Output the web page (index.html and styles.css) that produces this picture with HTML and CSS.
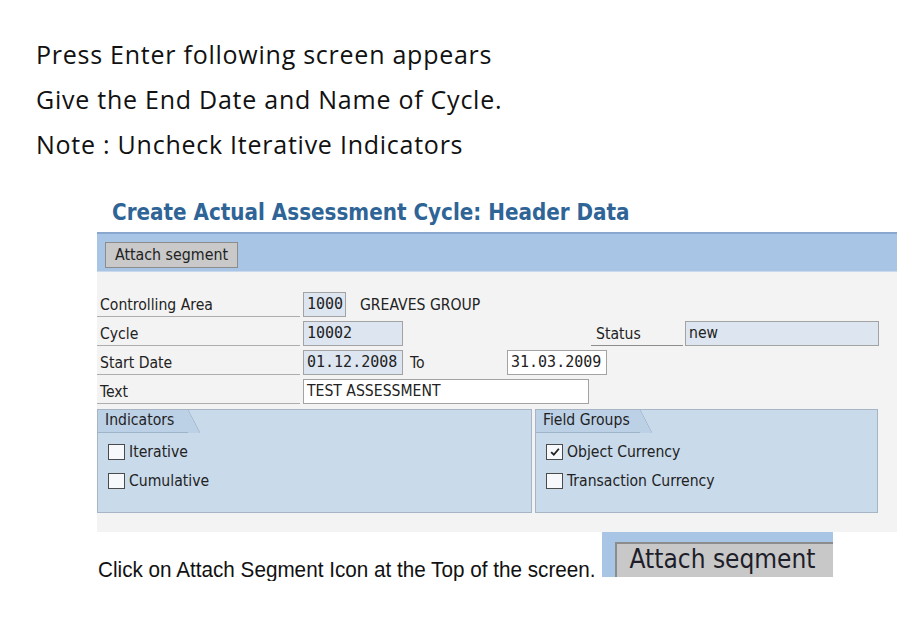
FILE: index.html
```html
<!DOCTYPE html>
<html>
<head>
<meta charset="utf-8">
<link rel="stylesheet" href="styles.css">
</head>
<body>
<div class="notes">
  <p>Press Enter following screen appears</p>
  <p>Give the End Date and Name of Cycle.</p>
  <p>Note : Uncheck Iterative Indicators</p>
</div>

<div class="screen">
  <h1 class="title">Create Actual Assessment Cycle: Header Data</h1>
  <div class="toolbar">
    <span class="btn">Attach segment</span>
  </div>
  <div class="form">
    <div class="row">
      <span class="label">Controlling Area</span>
      <span class="field mono w-area">1000</span>
      <span class="plain">GREAVES GROUP</span>
    </div>
    <div class="row">
      <span class="label">Cycle</span>
      <span class="field mono w-cycle">10002</span>
      <span class="label2">Status</span>
      <span class="field w-status">new</span>
    </div>
    <div class="row">
      <span class="label">Start Date</span>
      <span class="field mono w-date">01.12.2008</span>
      <span class="to">To</span>
      <span class="field mono white w-date">31.03.2009</span>
    </div>
    <div class="row">
      <span class="label">Text</span>
      <span class="field white w-text">TEST ASSESSMENT</span>
    </div>
    <div class="groups">
      <div class="group g-ind">
        <div class="tab">Indicators</div>
        <label class="check"><span class="box"></span>Iterative</label>
        <label class="check"><span class="box"></span>Cumulative</label>
      </div>
      <div class="group g-fld">
        <div class="tab">Field Groups</div>
        <label class="check"><span class="box on"><svg viewBox="0 0 14 14" width="12" height="12"><path d="M2.5 7.2 L5.6 10.2 L11.5 3.2" fill="none" stroke="#222" stroke-width="2.2"/></svg></span>Object Currency</label>
        <label class="check"><span class="box"></span>Transaction Currency</label>
      </div>
    </div>
  </div>
</div>

<div class="footer">
  <span class="footnote">Click on Attach Segment Icon at the Top of the screen.</span>
  <span class="bigbar"><span class="bigbtn">Attach seqment</span></span>
</div>
</body>
</html>
```

FILE: styles.css
```css
* { box-sizing: border-box; }
html, body { margin: 0; padding: 0; background: #ffffff; }
body { width: 916px; height: 644px; overflow: hidden; }

.notes {
  padding: 32px 0 0 36px;
  font-family: "Open Sans", Lato, sans-serif;
  font-size: 25px;
  letter-spacing: 0.75px;
  color: #111;
}
.notes p { margin: 0; height: 45px; line-height: 45px; white-space: nowrap; }

.screen {
  margin: 31px 0 0 97px;
  width: 800px;
  font-family: "DejaVu Sans Condensed", "DejaVu Sans", sans-serif;
}
.title {
  margin: 0 0 0 15px;
  height: 34px;
  font-size: 22.2px;
  font-weight: bold;
  color: #2f6497;
  line-height: 28px;
  white-space: nowrap;
}
.toolbar {
  height: 40px;
  background: #a9c5e6;
  border-top: 2px solid #8aa8cf;
  border-bottom: 1px solid #c9d8ea;
  padding: 8px 0 0 8px;
  display: flex;
  align-items: flex-start;
}
.btn {
  display: inline-block;
  height: 26px;
  line-height: 24px;
  padding: 0 9px;
  background: #c9c9c9;
  border: 1px solid #8c8c8c;
  font-size: 15.8px;
  color: #222;
}

.form {
  background: #f3f3f3;
  height: 260px;
  padding-top: 18px;
  font-size: 15.6px;
  color: #222;
}
.row {
  display: flex;
  align-items: center;
  height: 29px;
}
.label {
  width: 203px;
  margin-right: 3px;
  padding-left: 3px;
  height: 25px;
  line-height: 26px;
  border-bottom: 1px solid #adadad;
  align-self: flex-end;
  margin-bottom: 2px;
  white-space: nowrap;
}
.field {
  height: 25px;
  line-height: 23px;
  padding: 0 3px;
  background: #dde6f0;
  border: 1px solid #a3a3a3;
  white-space: nowrap;
  overflow: hidden;
}
.field.white { background: #ffffff; }
.mono { font-family: "DejaVu Sans Mono", monospace; font-size: 15px; }
.w-area { width: 43px; }
.w-cycle { width: 100px; }
.w-date { width: 100px; }
.w-text { width: 286px; }
.w-status { width: 194px; }
.plain { margin-left: 14px; }
.label2 {
  margin-left: 188px;
  width: 92px;
  padding-left: 5px;
  margin-right: 2px;
  height: 25px;
  line-height: 26px;
  border-bottom: 1px solid #8d8d8d;
  align-self: flex-end;
  margin-bottom: 2px;
}
.to { margin-left: 7px; width: 97px; }

.groups {
  display: flex;
  gap: 3px;
  margin-top: 3px;
}
.group {
  height: 104px;
  background: #c9daeb;
  border: 1px solid #a6b5c6;
}
.g-ind { width: 435px; }
.g-fld { width: 343px; }
.tab {
  position: relative;
  display: inline-block;
  height: 23px;
  line-height: 21px;
  padding: 0 0 0 7px;
  margin-bottom: 9px;
  background: #bcd0e6;
  border-bottom: 1px solid #9fb3c9;
  color: #1f1f1f;
  white-space: nowrap;
}
.g-ind .tab { width: 90px; }
.g-fld .tab { width: 104px; }
.tab::after {
  content: "";
  position: absolute;
  top: 0;
  right: -12px;
  width: 12px;
  height: 23px;
  background: linear-gradient(to top right, #bcd0e6 48%, #9fb3c9 50%, transparent 54%);
}
.check {
  display: flex;
  align-items: center;
  height: 29px;
  padding-left: 10px;
  margin-top: -5px;
  margin-bottom: 5px;
}
.box {
  display: inline-flex;
  align-items: center;
  justify-content: center;
  width: 17px;
  height: 16px;
  border: 1px solid #4a4a4a;
  background: #f6f8fb;
  margin-right: 4px;
}

.footer {
  margin: 0 0 0 98px;
  display: flex;
  align-items: flex-end;
  height: 45px;
}
.footnote {
  font-family: "Liberation Sans", Arial, sans-serif;
  font-size: 20.7px;
  color: #111;
  line-height: 22px;
  transform: scaleY(1.08);
  white-space: nowrap;
  margin-bottom: -3px;
}
.bigbar {
  margin-left: 6px;
  display: flex;
  align-items: flex-end;
  width: 231px;
  height: 45px;
  background: #a9c5e6;
  padding-left: 13px;
}
.bigbtn {
  display: block;
  width: 218px;
  height: 35px;
  background: #c8c8c8;
  border-top: 2px solid #8c8c8c;
  border-left: 2px solid #8c8c8c;
  font-family: "DejaVu Sans Condensed", "DejaVu Sans", sans-serif;
  font-size: 26px;
  line-height: 31px;
  padding-left: 13px;
  color: #1e1e2a;
  white-space: nowrap;
  overflow: hidden;
}
```
